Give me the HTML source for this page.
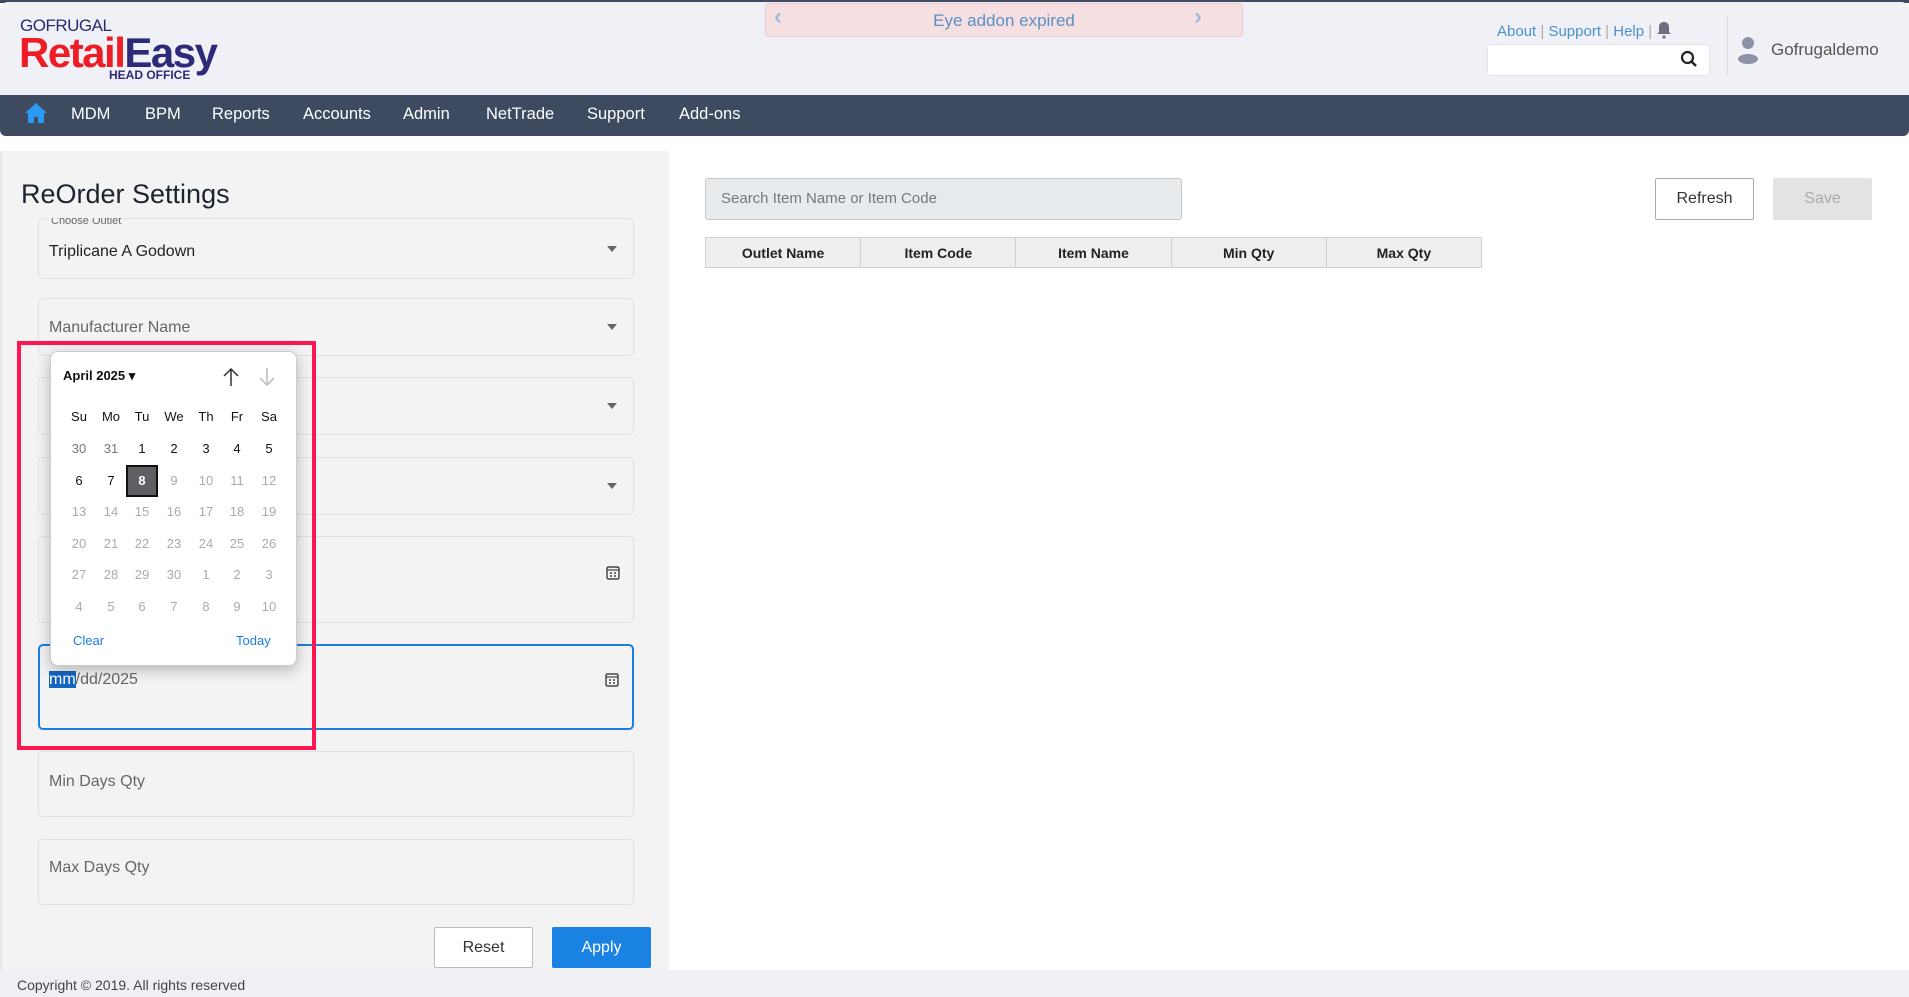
<!DOCTYPE html>
<html><head><meta charset="utf-8"><style>
*{box-sizing:border-box;margin:0;padding:0}
body{width:1909px;height:997px;position:relative;overflow:hidden;background:#fff;font-family:"Liberation Sans",sans-serif;color:#222}
.a{position:absolute}
.fld{position:absolute;left:38px;width:596px;border:1px solid #dde1e5;border-radius:5px;background:#f3f3f3}
.caret{position:absolute;right:16px;width:0;height:0;border-left:5px solid transparent;border-right:5px solid transparent;border-top:6px solid #666}
.nav span{position:absolute;top:105px;color:#fff;font-size:16.5px}
.cal div{position:absolute;width:32px;text-align:center;font-size:13px;color:#111}
.cal .g{color:#aaa}
th{font-weight:bold;font-size:14px;border:1px solid #d0d0d0;background:#efefef;height:30px;width:155px}
</style></head><body>
<div class="a" style="left:0;top:0;width:1909px;height:3px;background:#3d4a5f"></div>
<div class="a" style="left:0;top:2px;width:1909px;height:94px;background:#f0f1f6;border-radius:8px 8px 0 0"></div>
<div class="a" style="left:20px;top:16px;font-size:17px;color:#2b2a6e;letter-spacing:-0.5px">GOFRUGAL</div>
<div class="a" style="left:19px;top:31px;font-size:42px;font-weight:bold;letter-spacing:-1.5px;line-height:44px"><span style="color:#ee1c25">Retail</span><span style="color:#2e2a7a">Easy</span></div>
<div class="a" style="left:109px;top:68px;font-size:12px;font-weight:bold;color:#2e2a7a">HEAD OFFICE</div>
<div class="a" style="left:765px;top:3px;width:478px;height:34px;background:#f5dfe1;border:1px solid #efc9cd;border-radius:3px;text-align:center;line-height:34px;color:#5b8fc6;font-size:17px">Eye addon expired
<span class="a" style="left:8px;top:-4px;color:#9dbddc;font-size:24px;font-weight:bold">‹</span>
<span class="a" style="right:40px;top:-4px;color:#9dbddc;font-size:24px;font-weight:bold">›</span></div>
<div class="a" style="left:1497px;top:23px;font-size:15px;color:#4a90d0">About <span style="color:#aaa">|</span> Support <span style="color:#aaa">|</span> Help <span style="color:#aaa">|</span></div>
<svg class="a" style="left:1656px;top:21px" width="16" height="18" viewBox="0 0 16 18"><path d="M8 1c-3 0-5 2-5 5v5l-2 2h14l-2-2V6c0-3-2-5-5-5z" fill="#6b6f80"/><circle cx="8" cy="16" r="1.6" fill="#6b6f80"/></svg>
<div class="a" style="left:1487px;top:44px;width:223px;height:32px;background:#fff;border:1px solid #e2e4ea;border-radius:3px"></div>
<svg class="a" style="left:1680px;top:50px" width="18" height="18" viewBox="0 0 18 18"><circle cx="7.5" cy="7.5" r="5.5" fill="none" stroke="#222" stroke-width="2.2"/><path d="M11.5 11.5l4.5 4.5" stroke="#222" stroke-width="2.5"/></svg>
<div class="a" style="left:1727px;top:14px;width:1px;height:62px;background:#dcdde3"></div>
<svg class="a" style="left:1737px;top:36px" width="22" height="28" viewBox="0 0 22 28"><circle cx="11" cy="7" r="6" fill="#8e92a8"/><ellipse cx="11" cy="23" rx="10" ry="5" fill="#8e92a8"/></svg>
<div class="a" style="left:1771px;top:40px;font-size:17px;color:#555">Gofrugaldemo</div>
<div class="a" style="left:0;top:95px;width:1909px;height:41px;background:#3d4a5f;border-radius:0 0 6px 6px"></div>
<svg class="a" style="left:24px;top:101px" width="24" height="24" viewBox="0 0 24 24"><path d="M12 2L1 12h3v10h6v-6h4v6h6V12h3z" fill="#2b9af3"/></svg>
<div class="nav"><span style="left:71px">MDM</span><span style="left:145px">BPM</span><span style="left:212px">Reports</span><span style="left:303px">Accounts</span><span style="left:403px">Admin</span><span style="left:486px">NetTrade</span><span style="left:587px">Support</span><span style="left:679px">Add-ons</span></div>
<div class="a" style="left:0;top:151px;width:669px;height:819px;background:#f3f3f3;border-left:2px solid #e6e6e6"></div>
<div class="a" style="left:21px;top:179px;font-size:27px;color:#1c2430">ReOrder Settings</div>
<div class="fld" style="top:218px;height:61px"><div class="a" style="left:10px;top:-1px;font-size:11px;color:#666;background:#f3f3f3;padding:0 2px;height:8px;overflow:hidden;line-height:6px">Choose Outlet</div><div class="a" style="left:10px;top:24px;font-size:16px;color:#222">Triplicane A Godown</div><div class="caret" style="top:27px"></div></div>
<div class="fld" style="top:298px;height:58px"><div class="a" style="left:10px;top:20px;font-size:16px;color:#666">Manufacturer Name</div><div class="caret" style="top:25px"></div></div>
<div class="fld" style="top:377px;height:58px"><div class="caret" style="top:25px"></div></div>
<div class="fld" style="top:457px;height:58px"><div class="caret" style="top:25px"></div></div>
<div class="fld" style="top:536px;height:87px"><svg class="a" style="right:13px;top:29px" width="14" height="14" viewBox="0 0 14 14"><rect x="1" y="1" width="12" height="12" rx="1.5" fill="none" stroke="#222" stroke-width="1.2"/><path d="M1 4h12" stroke="#222"/><path d="M4 7h2M8 7h2M4 10h2M8 10h2" stroke="#445" stroke-width="1.6"/></svg></div>
<div class="fld" style="top:644px;height:86px;border:2px solid #1a7fe0"><div class="a" style="left:9px;top:25px;font-size:16px;color:#666"><span style="background:#1565c0;color:#fff">mm</span>/dd/2025</div><svg class="a" style="right:13px;top:27px" width="14" height="14" viewBox="0 0 14 14"><rect x="1" y="1" width="12" height="12" rx="1.5" fill="none" stroke="#222" stroke-width="1.2"/><path d="M1 4h12" stroke="#222"/><path d="M4 7h2M8 7h2M4 10h2M8 10h2" stroke="#445" stroke-width="1.6"/></svg></div>
<div class="fld" style="top:751px;height:66px"><div class="a" style="left:10px;top:21px;font-size:16px;color:#666">Min Days Qty</div></div>
<div class="fld" style="top:839px;height:66px"><div class="a" style="left:10px;top:19px;font-size:16px;color:#666">Max Days Qty</div></div>
<div class="a" style="left:434px;top:927px;width:99px;height:41px;background:#fff;border:1px solid #bbb;border-radius:2px;text-align:center;line-height:39px;font-size:16px;color:#333">Reset</div>
<div class="a" style="left:552px;top:927px;width:99px;height:41px;background:#1a82e2;border-radius:2px;text-align:center;line-height:41px;font-size:16px;color:#fff">Apply</div>
<div class="a" style="left:0;top:970px;width:1909px;height:27px;background:#eff0f4"></div>
<div class="a" style="left:17px;top:977px;font-size:14px;color:#444">Copyright © 2019. All rights reserved</div>
<div class="a" style="left:17px;top:341px;width:299px;height:409px;border:4px solid #ff1552"></div>
<div class="a cal" style="left:50px;top:351px;width:247px;height:315px;background:#fff;border:1px solid #ccc;border-radius:8px;box-shadow:0 4px 14px rgba(0,0,0,0.25)">
<div style="left:12px;top:16px;width:auto;font-weight:bold;font-size:13px">April 2025 ▾</div>
<svg class="a" style="left:170px;top:14px" width="20" height="22" viewBox="0 0 20 22"><path d="M10 20V3M3 10l7-7 7 7" fill="none" stroke="#333" stroke-width="1.5"/></svg>
<svg class="a" style="left:206px;top:14px" width="20" height="22" viewBox="0 0 20 22"><path d="M10 2v17M3 12l7 7 7-7" fill="none" stroke="#bbb" stroke-width="1.5"/></svg>
<div style="left:12px;top:57px">Su</div><div style="left:44px;top:57px">Mo</div><div style="left:75px;top:57px">Tu</div><div style="left:107px;top:57px">We</div><div style="left:139px;top:57px">Th</div><div style="left:170px;top:57px">Fr</div><div style="left:202px;top:57px">Sa</div>
<div class="g" style="left:12px;top:89px;color:#777">30</div><div class="g" style="left:44px;top:89px;color:#777">31</div><div style="left:75px;top:89px">1</div><div style="left:107px;top:89px">2</div><div style="left:139px;top:89px">3</div><div style="left:170px;top:89px">4</div><div style="left:202px;top:89px">5</div>
<div style="left:12px;top:121px">6</div><div style="left:44px;top:121px">7</div><div style="left:75px;top:113px;width:32px;height:32px;background:#5f5f66;border:2px solid #111;color:#fff;font-weight:bold;line-height:28px">8</div><div class="g" style="left:107px;top:121px">9</div><div class="g" style="left:139px;top:121px">10</div><div class="g" style="left:170px;top:121px">11</div><div class="g" style="left:202px;top:121px">12</div>
<div class="g" style="left:12px;top:152px">13</div><div class="g" style="left:44px;top:152px">14</div><div class="g" style="left:75px;top:152px">15</div><div class="g" style="left:107px;top:152px">16</div><div class="g" style="left:139px;top:152px">17</div><div class="g" style="left:170px;top:152px">18</div><div class="g" style="left:202px;top:152px">19</div>
<div class="g" style="left:12px;top:184px">20</div><div class="g" style="left:44px;top:184px">21</div><div class="g" style="left:75px;top:184px">22</div><div class="g" style="left:107px;top:184px">23</div><div class="g" style="left:139px;top:184px">24</div><div class="g" style="left:170px;top:184px">25</div><div class="g" style="left:202px;top:184px">26</div>
<div class="g" style="left:12px;top:215px">27</div><div class="g" style="left:44px;top:215px">28</div><div class="g" style="left:75px;top:215px">29</div><div class="g" style="left:107px;top:215px">30</div><div class="g" style="left:139px;top:215px">1</div><div class="g" style="left:170px;top:215px">2</div><div class="g" style="left:202px;top:215px">3</div>
<div class="g" style="left:12px;top:247px">4</div><div class="g" style="left:44px;top:247px">5</div><div class="g" style="left:75px;top:247px">6</div><div class="g" style="left:107px;top:247px">7</div><div class="g" style="left:139px;top:247px">8</div><div class="g" style="left:170px;top:247px">9</div><div class="g" style="left:202px;top:247px">10</div>
<div style="left:22px;top:281px;width:auto;color:#1a7fe0">Clear</div><div style="left:185px;top:281px;width:auto;color:#1a7fe0">Today</div>
</div>
<div class="a" style="left:705px;top:178px;width:477px;height:42px;background:#e8ebee;border:1px solid #c8c8c8;border-radius:3px;font-size:15px;color:#777;line-height:40px;padding-left:15px">Search Item Name or Item Code</div>
<div class="a" style="left:1655px;top:178px;width:99px;height:42px;background:#fff;border:1px solid #aaa;border-radius:2px;text-align:center;line-height:40px;font-size:16px;color:#333">Refresh</div>
<div class="a" style="left:1773px;top:178px;width:99px;height:42px;background:#e3e3e3;border-radius:2px;text-align:center;line-height:42px;font-size:16px;color:#aaa">Save</div>
<table class="a" style="left:705px;top:237px;border-collapse:collapse;width:777px"><tr><th>Outlet Name</th><th>Item Code</th><th>Item Name</th><th>Min Qty</th><th>Max Qty</th></tr></table>
</body></html>
